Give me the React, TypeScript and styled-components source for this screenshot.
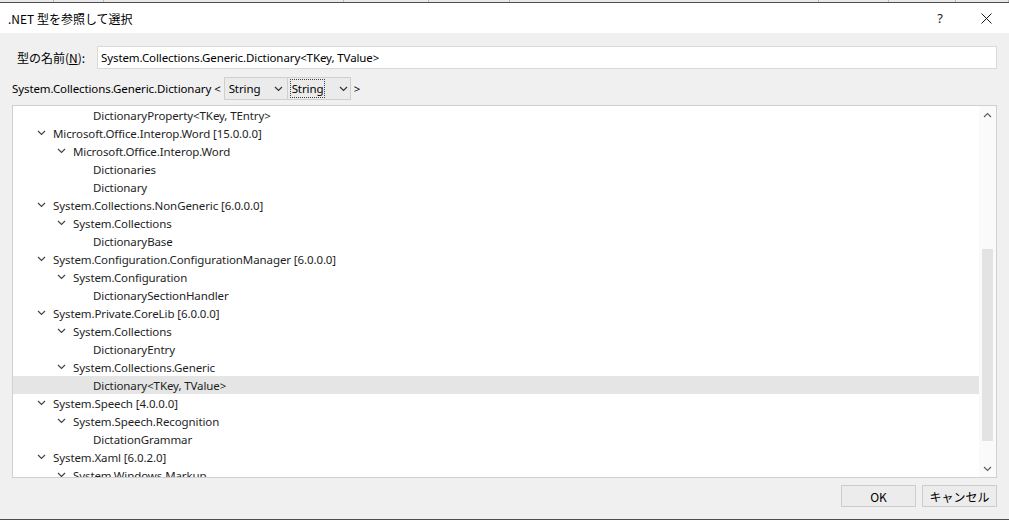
import React from "react";
import styled, { createGlobalStyle } from "styled-components";

const GlobalStyle = createGlobalStyle`
  html, body {
    margin: 0;
    padding: 0;
    background: #f0f0f0;
  }
  body {
    font-family: "Segoe UI", "Noto Sans", "Noto Sans CJK JP", sans-serif;
    font-size: 11.5px;
    letter-spacing: -0.1px;
    color: #000;
  }
`;

const Window = styled.div`
  width: 1009px;
  height: 520px;
  display: flex;
  flex-direction: column;
  overflow: hidden;
`;

// ウィンドウ上端に見えている後ろのウィンドウ
const BackStrip = styled.div`
  height: 2px;
  background: #e9e9e9;
  border-bottom: 1px solid #4d4d4d;
  display: flex;
`;

const BackCell = styled.div<{ $w: number }>`
  width: ${(p) => p.$w}px;
  border-right: 1px solid #b8b8b8;
`;

const TitleBar = styled.div`
  height: 30px;
  background: #fff;
  display: flex;
  align-items: center;
`;

const Title = styled.div`
  flex: 1;
  padding-left: 8px;
  font-family: "Segoe UI", "Noto Sans CJK JP", sans-serif;
  font-size: 12px;
  letter-spacing: 0;
  color: #000;
`;

const CaptionButton = styled.div`
  width: 46px;
  height: 30px;
  display: flex;
  align-items: center;
  justify-content: center;
  color: #1a1a1a;
  font-size: 13px;
`;

const Body = styled.div`
  flex: 1;
  display: flex;
  flex-direction: column;
  padding: 13px 12px 12px 12px;
  border-bottom: 1px solid #4d4d4d;
`;

const NameRow = styled.div`
  display: flex;
  align-items: center;
  height: 23px;
`;

const Label = styled.label`
  width: 80px;
  padding-left: 5px;
  font-family: "Segoe UI", "Noto Sans CJK JP", sans-serif;
  font-size: 12px;
  letter-spacing: 0;
  color: #000;
`;

const TextBox = styled.div`
  flex: 1;
  height: 21px;
  background: #fff;
  border: 1px solid #d9d9d9;
  display: flex;
  align-items: center;
  padding-left: 3px;
`;

const TypeRow = styled.div`
  display: flex;
  align-items: center;
  height: 23px;
  margin-top: 8px;
`;

const Combo = styled.div`
  width: 58px;
  height: 21px;
  border: 1px solid #cfcfcf;
  background: #ebebeb;
  display: flex;
  align-items: center;
  padding-left: 4px;
  margin-left: -1px;
  &:first-of-type {
    margin-left: 0;
  }
`;

const ComboText = styled.span<{ $focus?: boolean }>`
  flex: 1;
  outline: ${(p) => (p.$focus ? "1px dotted #444" : "none")};
  outline-offset: 1px;
  margin-right: ${(p) => (p.$focus ? "14px" : "0")};
`;

const ComboArrow = styled.span`
  width: 16px;
  display: flex;
  justify-content: center;
`;

const Angle = styled.span`
  margin: 0 3px;
`;

const TreeBox = styled.div`
  margin-top: 5px;
  height: 371px;
  border: 1px solid #d0d0d0;
  background: #fff;
  display: flex;
`;

const TreeList = styled.div`
  flex: 1;
  overflow: hidden;
`;

const TreeRow = styled.div<{ $level: number; $selected?: boolean }>`
  height: 18px;
  display: flex;
  align-items: center;
  padding-left: ${(p) => 18 + p.$level * 20}px;
  background: ${(p) => (p.$selected ? "#e5e5e5" : "transparent")};
  color: #1e1e1e;
  white-space: nowrap;
`;

const Expander = styled.span`
  width: 20px;
  display: flex;
  align-items: center;
  justify-content: center;
  padding-right: 2px;
`;

const ScrollBar = styled.div`
  width: 17px;
  background: #fafafa;
  display: flex;
  flex-direction: column;
`;

const ScrollArrow = styled.div`
  height: 17px;
  display: flex;
  align-items: center;
  justify-content: center;
`;

const ScrollTrack = styled.div`
  flex: 1;
  display: flex;
  flex-direction: column;
  align-items: center;
`;

const Thumb = styled.div<{ $top: number; $height: number }>`
  width: 11px;
  margin-top: ${(p) => p.$top}px;
  height: ${(p) => p.$height}px;
  background: #e3e3e3;
`;

const ButtonRow = styled.div`
  margin-top: 7px;
  display: flex;
  justify-content: flex-end;
  gap: 6px;
`;

const Button = styled.div`
  width: 73px;
  height: 20px;
  border: 1px solid #cccccc;
  background: #ececec;
  display: flex;
  align-items: center;
  justify-content: center;
  font-family: "Segoe UI", "Noto Sans CJK JP", sans-serif;
  font-size: 12px;
  letter-spacing: 0;
  color: #000;
`;

const Chevron = ({ color = "#444" }: { color?: string }) => (
  <svg width="9" height="6" viewBox="0 0 9 6">
    <polyline
      points="1,1 4.5,4.5 8,1"
      fill="none"
      stroke={color}
      strokeWidth="1.2"
    />
  </svg>
);

const ChevronUp = () => (
  <svg width="9" height="6" viewBox="0 0 9 6">
    <polyline
      points="1,5 4.5,1.5 8,5"
      fill="none"
      stroke="#606060"
      strokeWidth="1.2"
    />
  </svg>
);

type Node = { level: number; text: string; selected?: boolean };

const rows: Node[] = [
  { level: 2, text: "DictionaryProperty<TKey, TEntry>" },
  { level: 0, text: "Microsoft.Office.Interop.Word [15.0.0.0]" },
  { level: 1, text: "Microsoft.Office.Interop.Word" },
  { level: 2, text: "Dictionaries" },
  { level: 2, text: "Dictionary" },
  { level: 0, text: "System.Collections.NonGeneric [6.0.0.0]" },
  { level: 1, text: "System.Collections" },
  { level: 2, text: "DictionaryBase" },
  { level: 0, text: "System.Configuration.ConfigurationManager [6.0.0.0]" },
  { level: 1, text: "System.Configuration" },
  { level: 2, text: "DictionarySectionHandler" },
  { level: 0, text: "System.Private.CoreLib [6.0.0.0]" },
  { level: 1, text: "System.Collections" },
  { level: 2, text: "DictionaryEntry" },
  { level: 1, text: "System.Collections.Generic" },
  { level: 2, text: "Dictionary<TKey, TValue>", selected: true },
  { level: 0, text: "System.Speech [4.0.0.0]" },
  { level: 1, text: "System.Speech.Recognition" },
  { level: 2, text: "DictationGrammar" },
  { level: 0, text: "System.Xaml [6.0.2.0]" },
  { level: 1, text: "System.Windows.Markup" },
];

const backCells = [53, 50, 241, 85, 81, 310, 70, 67, 52];

export default function App() {
  return (
    <Window>
      <GlobalStyle />
      <BackStrip>
        {backCells.map((w, i) => (
          <BackCell key={i} $w={w} />
        ))}
      </BackStrip>
      <TitleBar>
        <Title>.NET 型を参照して選択</Title>
        <CaptionButton>?</CaptionButton>
        <CaptionButton>
          <svg width="11" height="11" viewBox="0 0 11 11">
            <path d="M0.5 0.5 L10.5 10.5 M10.5 0.5 L0.5 10.5" stroke="#1a1a1a" strokeWidth="1" />
          </svg>
        </CaptionButton>
      </TitleBar>
      <Body>
        <NameRow>
          <Label>
            型の名前(<u>N</u>):
          </Label>
          <TextBox>System.Collections.Generic.Dictionary&lt;TKey, TValue&gt;</TextBox>
        </NameRow>
        <TypeRow>
          <span>System.Collections.Generic.Dictionary</span>
          <Angle>&lt;</Angle>
          <Combo>
            <ComboText>String</ComboText>
            <ComboArrow>
              <Chevron color="#333" />
            </ComboArrow>
          </Combo>
          <Combo>
            <ComboText $focus>String</ComboText>
            <ComboArrow>
              <Chevron color="#333" />
            </ComboArrow>
          </Combo>
          <Angle>&gt;</Angle>
        </TypeRow>
        <TreeBox>
          <TreeList>
            {rows.map((r, i) => (
              <TreeRow key={i} $level={r.level} $selected={r.selected}>
                <Expander>{r.level < 2 && <Chevron />}</Expander>
                {r.text}
              </TreeRow>
            ))}
          </TreeList>
          <ScrollBar>
            <ScrollArrow>
              <ChevronUp />
            </ScrollArrow>
            <ScrollTrack>
              <Thumb $top={126} $height={192} />
            </ScrollTrack>
            <ScrollArrow>
              <Chevron color="#606060" />
            </ScrollArrow>
          </ScrollBar>
        </TreeBox>
        <ButtonRow>
          <Button>OK</Button>
          <Button>キャンセル</Button>
        </ButtonRow>
      </Body>
    </Window>
  );
}
